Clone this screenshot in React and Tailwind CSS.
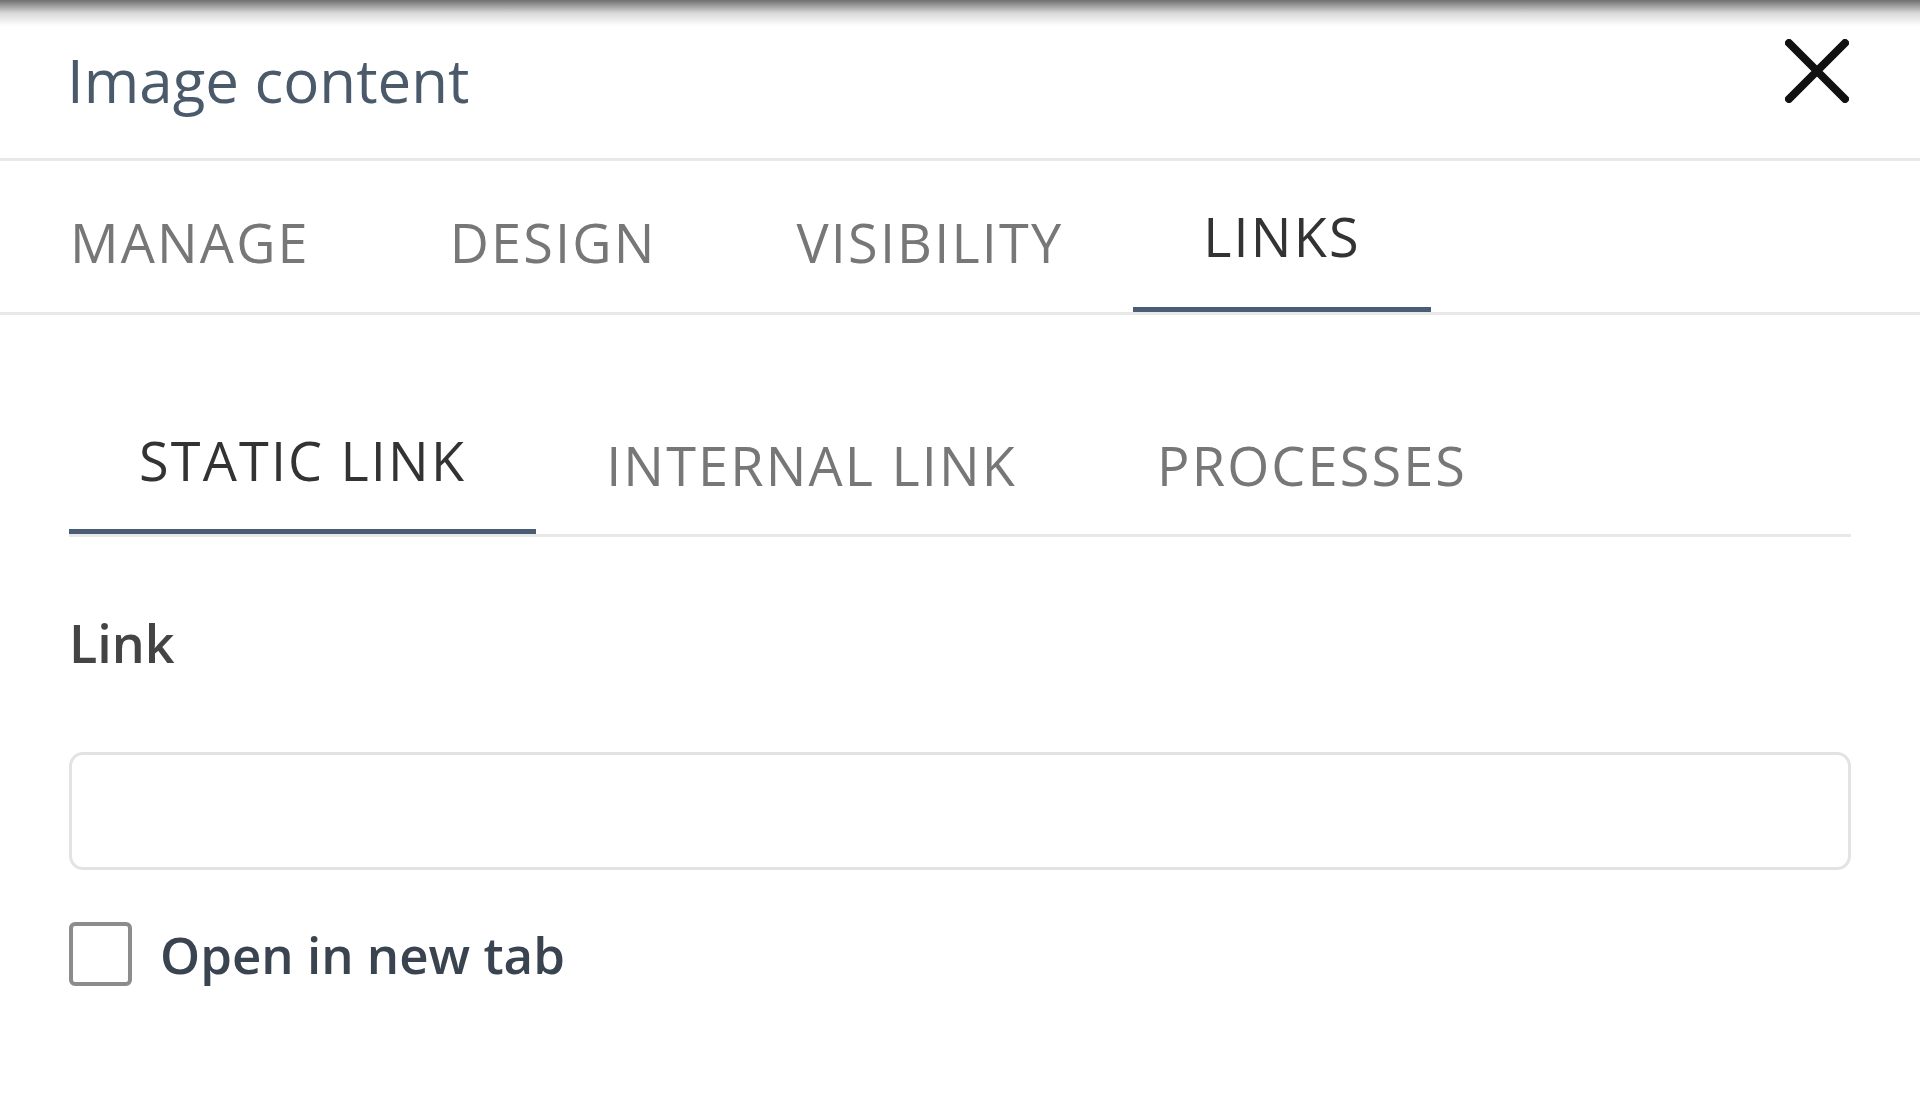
import { useState } from "react"

const MAIN_TABS = ["MANAGE", "DESIGN", "VISIBILITY", "LINKS"]
const SUB_TABS = ["STATIC LINK", "INTERNAL LINK", "PROCESSES"]

export default function App() {
  const [tab, setTab] = useState("LINKS")
  const [subTab, setSubTab] = useState("STATIC LINK")
  const [link, setLink] = useState("")
  const [newTab, setNewTab] = useState(false)

  return (
    <div className="min-h-screen bg-white font-['Open_Sans',sans-serif]">
      {/* Header */}
      <div className="relative h-[161px] flex items-start justify-between px-[70px] border-b-[3px] border-[#e8e8e8]">
        <div className="absolute top-0 left-0 right-0 h-[26px] bg-gradient-to-b from-[#707070] via-[#d8d8d8] to-white" />
        <h1 className="mt-[44px] -ml-[3px] text-[60px] leading-[72px] font-normal text-[#4a5a6b]">
          Image content
        </h1>
        <button className="mt-[39px] mr-[1px] text-[#111]">
          <svg width="64" height="64" viewBox="0 0 64 64" fill="none">
            <path d="M4 4 L60 60 M60 4 L4 60" stroke="currentColor" strokeWidth="8" strokeLinecap="round" />
          </svg>
        </button>
      </div>

      {/* Main tabs */}
      <div className="flex border-b-[3px] border-[#e8e8e8]">
        {MAIN_TABS.map((t) => (
          <button
            key={t}
            onClick={() => setTab(t)}
            className={`px-[70px] text-[54px] leading-none tracking-[0.04em] border-b-[5px] ${
              tab === t
                ? "pt-[48px] pb-[44px] text-[#333] border-[#4a5d75]"
                : "pt-[54px] pb-[38px] text-[#777] border-transparent"
            }`}
          >
            {t}
          </button>
        ))}
      </div>

      {/* Content */}
      <div className="px-[69px]">
        <div className="flex border-b-[3px] border-[#e8e8e8] mt-[60px]">
          {SUB_TABS.map((t) => (
            <button
              key={t}
              onClick={() => setSubTab(t)}
              className={`px-[70px] text-[54px] leading-none tracking-[0.04em] border-b-[5px] ${
                subTab === t
                  ? "pt-[58px] pb-[42px] text-[#333] border-[#4a5d75]"
                  : "pt-[63px] pb-[37px] text-[#777] border-transparent"
              }`}
            >
              {t}
            </button>
          ))}
        </div>

        <label className="block mt-[80px] text-[52px] leading-none font-semibold text-[#444]">
          Link
        </label>
        <input
          value={link}
          onChange={(e) => setLink(e.target.value)}
          className="block w-full mt-[83px] h-[118px] border-[3px] border-[#e3e3e3] rounded-[14px] px-6 text-[50px] outline-none"
        />

        <label className="flex items-center gap-[28px] mt-[52px] cursor-pointer">
          <span
            onClick={() => setNewTab(!newTab)}
            className="w-[63px] h-[64px] border-[4px] border-[#8c8c8c] rounded-[6px] flex items-center justify-center"
          >
            {newTab && <span className="w-[30px] h-[30px] bg-[#4a5d75]" />}
          </span>
          <span className="text-[51px] leading-none font-semibold text-[#3a4450]">
            Open in new tab
          </span>
        </label>
      </div>
    </div>
  )
}
